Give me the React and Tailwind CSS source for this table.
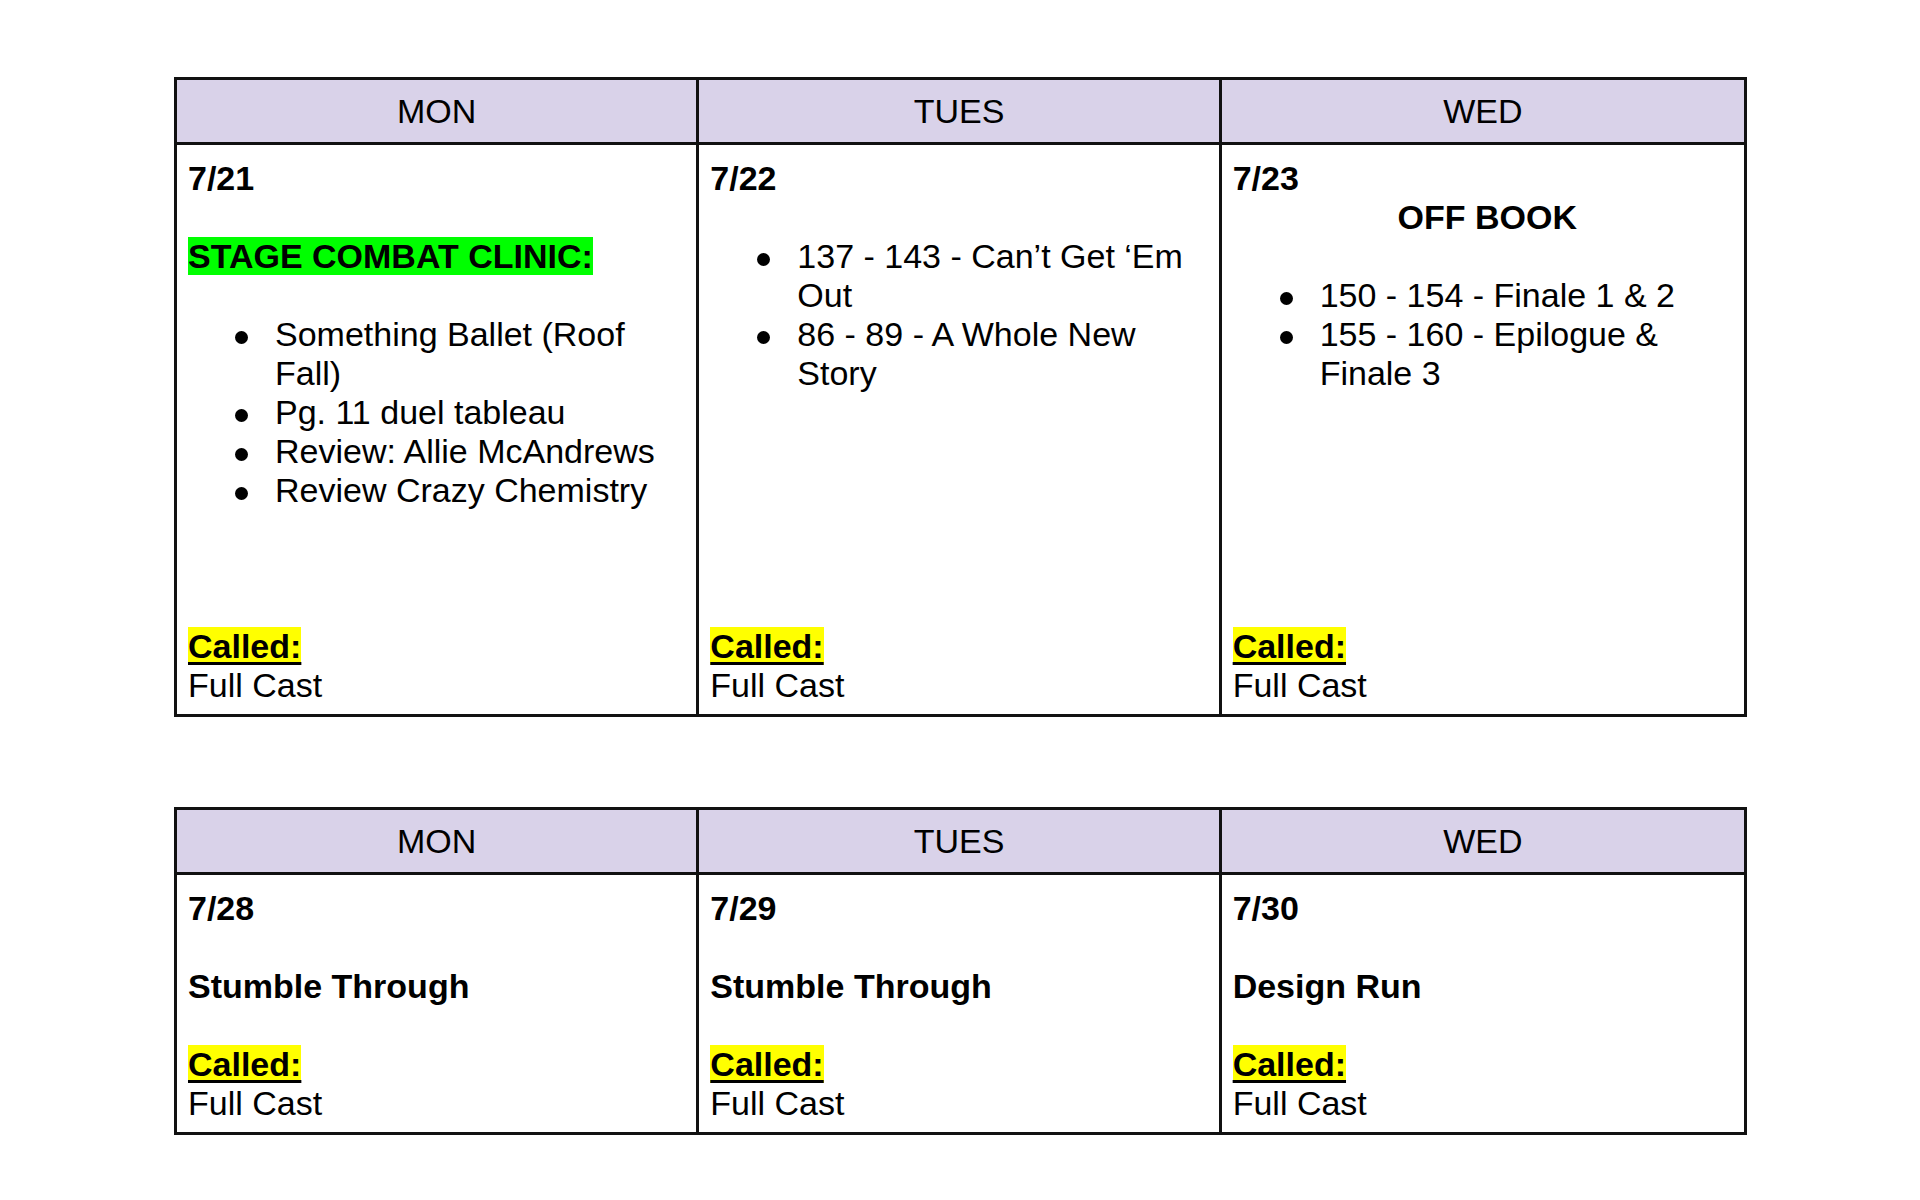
const days = ["MON", "TUES", "WED"];

function Bullets({ items }) {
  return (
    <ul>
      {items.map((item) => (
        <li key={item} className="flex pl-[47px]">
          <span className="w-[40px] shrink-0 pt-[16px]">
            <span className="block w-[13px] h-[13px] rounded-full bg-black"></span>
          </span>
          <span className="flex-1">{item}</span>
        </li>
      ))}
    </ul>
  );
}

function Blank({ lines = 1 }) {
  return <div style={{ height: lines * 39 }}></div>;
}

function Called() {
  return (
    <div className="mt-auto">
      <div>
        <span className="font-bold underline decoration-[3px] underline-offset-[4px] bg-[#ffff00]">
          Called:
        </span>
      </div>
      <div>Full Cast</div>
    </div>
  );
}

function Week({ cells, className }) {
  return (
    <div className={"w-[1573px] ml-[174px] border-[3px] border-[#111] " + className}>
      <div className="grid grid-cols-3 bg-[#d9d2e9] border-b-[3px] border-[#111]">
        {days.map((d, i) => (
          <div
            key={d}
            className={
              "h-[62px] flex items-center justify-center text-[34px] leading-none text-black " +
              (i < 2 ? "border-r-[3px] border-[#111]" : "")
            }
          >
            {d}
          </div>
        ))}
      </div>
      <div className="grid grid-cols-3">
        {cells.map((c, i) => (
          <div
            key={c.date}
            className={
              "flex flex-col pt-[14px] pb-[9px] pl-[11px] pr-[10px] text-[34px] leading-[39px] text-black " +
              (i < 2 ? "border-r-[3px] border-[#111]" : "")
            }
          >
            <div className="font-bold">{c.date}</div>
            {c.body}
            <Called />
          </div>
        ))}
      </div>
    </div>
  );
}

export default function App() {
  const week1 = [
    {
      date: "7/21",
      body: (
        <>
          <Blank />
          <div>
            <span className="font-bold bg-[#00ff00]">STAGE COMBAT CLINIC:</span>
          </div>
          <Blank />
          <Bullets
            items={[
              "Something Ballet (Roof Fall)",
              "Pg. 11 duel tableau",
              "Review: Allie McAndrews",
              "Review Crazy Chemistry",
            ]}
          />
          <Blank lines={3} />
        </>
      ),
    },
    {
      date: "7/22",
      body: (
        <>
          <Blank />
          <Bullets items={["137 - 143 - Can\u2019t Get \u2018Em Out", "86 - 89 - A Whole New Story"]} />
        </>
      ),
    },
    {
      date: "7/23",
      body: (
        <>
          <div className="font-bold text-center pl-[8px]">OFF BOOK</div>
          <Blank />
          <Bullets items={["150 - 154 - Finale 1 & 2", "155 - 160 - Epilogue & Finale 3"]} />
        </>
      ),
    },
  ];

  const week2 = [
    { date: "7/28", title: "Stumble Through" },
    { date: "7/29", title: "Stumble Through" },
    { date: "7/30", title: "Design Run" },
  ].map((c) => ({
    date: c.date,
    body: (
      <>
        <Blank />
        <div className="font-bold">{c.title}</div>
        <Blank />
      </>
    ),
  }));

  return (
    <div
      className="min-h-[1200px] bg-white pt-[77px]"
      style={{ fontFamily: '"Liberation Sans", Arial, sans-serif' }}
    >
      <Week cells={week1} />
      <Week cells={week2} className="mt-[90px]" />
    </div>
  );
}
